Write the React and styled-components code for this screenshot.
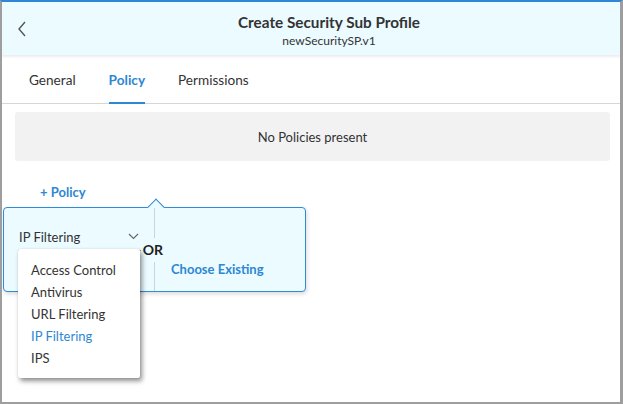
import React from "react";
import styled, { createGlobalStyle } from "styled-components";

const Global = createGlobalStyle`
  html, body { margin: 0; padding: 0; background: #fff; }
  body { font-family: Lato, "Noto Sans", sans-serif; color: #333; }
  * { box-sizing: border-box; }
`;

const Frame = styled.div`
  width: 623px;
  height: 404px;
  border-left: 2px solid #9e9e9e;
  border-right: 3px solid #9e9e9e;
  border-bottom: 2px solid #9e9e9e;
  border-top: 2px solid #2f86d6;
  display: flex;
  flex-direction: column;
  position: relative;
  overflow: hidden;
`;

const Header = styled.header`
  height: 53px;
  background: #ebfbff;
  display: flex;
  align-items: center;
  box-shadow: 0 2px 2px rgba(0, 0, 0, 0.08);
  position: relative;
  z-index: 1;
`;

const BackButton = styled.button`
  width: 36px;
  height: 100%;
  border: 0;
  background: transparent;
  padding: 0 0 0 15px;
  display: flex;
  align-items: center;
  cursor: pointer;
`;

const TitleBlock = styled.div`
  flex: 1;
  display: flex;
  flex-direction: column;
  align-items: center;
  padding-top: 4px;
`;

const Title = styled.h1`
  margin: 0;
  font-size: 15.3px;
  font-weight: 700;
  color: #333;
  line-height: 20px;
`;

const Subtitle = styled.div`
  font-size: 12px;
  color: #333;
  line-height: 16px;
  margin-top: 1px;
`;

const Tabs = styled.nav`
  height: 49px;
  display: flex;
  align-items: stretch;
  padding-left: 27px;
  gap: 33px;
  border-bottom: 1px solid #d6d6d6;
`;

const Tab = styled.div`
  display: flex;
  align-items: center;
  font-size: 13.6px;
  font-weight: ${(p) => (p.$active ? 700 : 400)};
  color: ${(p) => (p.$active ? "#2d87d3" : "#333")};
  border-bottom: 2px solid ${(p) => (p.$active ? "#2d87d3" : "transparent")};
  margin-bottom: -1px;
  padding-top: 2px;
`;

const Body = styled.main`
  flex: 1;
  padding: 8px 10px 0 13px;
  position: relative;
`;

const EmptyBox = styled.div`
  height: 49px;
  background: #f2f2f2;
  border-radius: 3px;
  display: flex;
  align-items: center;
  justify-content: center;
  font-size: 13px;
  color: #333;
`;

const AddLink = styled.div`
  margin: 23px 0 0 25px;
  font-size: 13px;
  font-weight: 700;
  color: #2d87d3;
  line-height: 16px;
`;

const Popover = styled.div`
  position: absolute;
  left: 1px;
  top: 205px;
  width: 303px;
  height: 85px;
  background: #ebfbff;
  border: 1px solid #2f8ad8;
  border-radius: 4px;
  box-shadow: 1px 2px 4px rgba(0, 0, 0, 0.15);
  display: flex;
  z-index: 2;
`;

const Arrow = styled.div`
  position: absolute;
  left: 146px;
  top: -7px;
  width: 12px;
  height: 12px;
  background: #ebfbff;
  border-left: 1px solid #2f8ad8;
  border-top: 1px solid #2f8ad8;
  transform: rotate(45deg);
`;

const LeftCol = styled.div`
  width: 151px;
  padding: 16px 14px 0 14px;
  border-right: 1px solid #c6d6da;
  position: relative;
`;

const SelectBox = styled.div`
  height: 26px;
  display: flex;
  align-items: center;
  justify-content: space-between;
  border-bottom: 1px dashed #9a9a9a;
  font-size: 13px;
  color: #333;
  padding: 0 2px 2px 1px;
  margin-top: 1px;
  width: 123px;
`;

const OrLabel = styled.span`
  position: absolute;
  right: -9px;
  top: 30px;
  background: #ebfbff;
  font-size: 14px;
  font-weight: 700;
  color: #222;
  padding: 4px 0;
  line-height: 16px;
`;

const RightCol = styled.div`
  flex: 1;
  display: flex;
  align-items: flex-start;
  padding: 53px 0 0 16px;
`;

const ChooseLink = styled.span`
  font-size: 13px;
  font-weight: 700;
  color: #2d87d3;
  line-height: 16px;
`;

const Menu = styled.ul`
  position: absolute;
  left: 16px;
  top: 247px;
  width: 122px;
  height: 129px;
  margin: 0;
  padding: 10px 0 0 0;
  list-style: none;
  background: #fff;
  border-radius: 2px;
  box-shadow: 2px 3px 5px rgba(0, 0, 0, 0.45), 0 0 1px rgba(0, 0, 0, 0.2);
  z-index: 3;
`;

const MenuItem = styled.li`
  height: 22px;
  display: flex;
  align-items: center;
  padding-left: 13px;
  font-size: 13px;
  color: ${(p) => (p.$selected ? "#2d87d3" : "#333")};
`;

const items = ["Access Control", "Antivirus", "URL Filtering", "IP Filtering", "IPS"];

export default function App() {
  return (
    <>
      <Global />
      <Frame>
        <Header>
          <BackButton aria-label="Back">
            <svg width="10" height="16" viewBox="0 0 10 16">
              <path d="M8 1 L2 8 L8 15" fill="none" stroke="#555" strokeWidth="1.4" />
            </svg>
          </BackButton>
          <TitleBlock>
            <Title>Create Security Sub Profile</Title>
            <Subtitle>newSecuritySP.v1</Subtitle>
          </TitleBlock>
        </Header>
        <Tabs>
          <Tab>General</Tab>
          <Tab $active>Policy</Tab>
          <Tab>Permissions</Tab>
        </Tabs>
        <Body>
          <EmptyBox>No Policies present</EmptyBox>
          <AddLink>+ Policy</AddLink>
        </Body>
        <Popover>
          <Arrow />
          <LeftCol>
            <SelectBox>
              <span>IP Filtering</span>
              <svg width="11" height="7" viewBox="0 0 11 7">
                <path d="M1 1 L5.5 5.5 L10 1" fill="none" stroke="#666" strokeWidth="1.1" />
              </svg>
            </SelectBox>
            <OrLabel>OR</OrLabel>
          </LeftCol>
          <RightCol>
            <ChooseLink>Choose Existing</ChooseLink>
          </RightCol>
        </Popover>
        <Menu>
          {items.map((it) => (
            <MenuItem key={it} $selected={it === "IP Filtering"}>
              {it}
            </MenuItem>
          ))}
        </Menu>
      </Frame>
    </>
  );
}
